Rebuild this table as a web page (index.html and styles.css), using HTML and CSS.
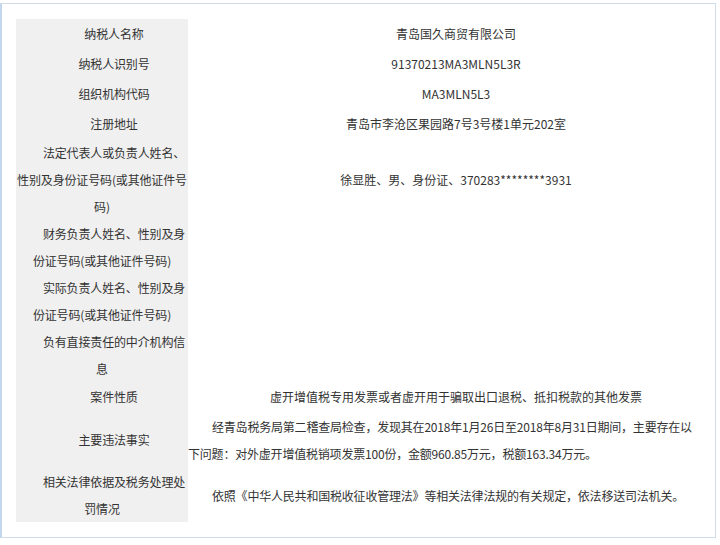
FILE: index.html
```html
<!DOCTYPE html>
<html lang="zh-CN">
<head>
    <meta charset="UTF-8">
    <meta name="viewport" content="width=device-width, initial-scale=1.0">
    <title>重大税收违法案件信息</title>
    <link rel="stylesheet" href="styles.css">
</head>
<body>
    <div class="case-box">
        <table class="case-table">
            <tr class="row-short">
                <td class="label">纳税人名称</td>
                <td class="value">青岛国久商贸有限公司</td>
            </tr>
            <tr class="row-short">
                <td class="label">纳税人识别号</td>
                <td class="value">91370213MA3MLN5L3R</td>
            </tr>
            <tr class="row-short">
                <td class="label">组织机构代码</td>
                <td class="value">MA3MLN5L3</td>
            </tr>
            <tr class="row-short">
                <td class="label">注册地址</td>
                <td class="value">青岛市李沧区果园路7号3号楼1单元202室</td>
            </tr>
            <tr class="row-3">
                <td class="label">法定代表人或负责人姓名、性别及身份证号码(或其他证件号码)</td>
                <td class="value">徐显胜、男、身份证、370283********3931</td>
            </tr>
            <tr class="row-2">
                <td class="label">财务负责人姓名、性别及身份证号码(或其他证件号码)</td>
                <td class="value"></td>
            </tr>
            <tr class="row-2">
                <td class="label">实际负责人姓名、性别及身份证号码(或其他证件号码)</td>
                <td class="value"></td>
            </tr>
            <tr class="row-2">
                <td class="label">负有直接责任的中介机构信息</td>
                <td class="value"></td>
            </tr>
            <tr class="row-kind">
                <td class="label">案件性质</td>
                <td class="value">虚开增值税专用发票或者虚开用于骗取出口退税、抵扣税款的其他发票</td>
            </tr>
            <tr class="row-facts">
                <td class="label">主要违法事实</td>
                <td class="value text">经青岛税务局第二稽查局检查，发现其在2018年1月26日至2018年8月31日期间，主要存在以下问题：对外虚开增值税销项发票100份，金额960.85万元，税额163.34万元。</td>
            </tr>
            <tr class="row-2">
                <td class="label">相关法律依据及税务处理处罚情况</td>
                <td class="value text">依照《中华人民共和国税收征收管理法》等相关法律法规的有关规定，依法移送司法机关。</td>
            </tr>
        </table>
    </div>
</body>
</html>
```

FILE: styles.css
```css
body {
    margin: 0;
    padding-top: 3px;
    font-family: "Microsoft YaHei", "Noto Sans CJK SC", sans-serif;
    font-size: 12px;
    color: #333;
    background-color: #fff;
}
.case-box {
    box-sizing: border-box;
    width: 716px;
    height: 535px;
    border: 1px solid #cfdcea;
    border-left: 2px solid #c3d7ec;
    padding: 15px 0 0 14px;
}
.case-table {
    width: 684px;
    border-collapse: collapse;
    table-layout: fixed;
}
.case-table td {
    padding: 0;
    vertical-align: middle;
    text-align: center;
    text-indent: 2em;
    line-height: 27px;
}
.case-table .label {
    width: 172px;
    background-color: #f0f0f0;
    letter-spacing: -0.15px;
}
.case-table .value.text {
    text-align: left;
    font-family: "SimSun", "Noto Sans CJK SC", sans-serif;
    letter-spacing: -0.2px;
}
.row-short td {
    height: 30px;
    line-height: 30px;
}
.row-3 td {
    height: 81px;
}
.row-2 td {
    height: 54px;
}
.row-kind td {
    height: 29px;
}
.row-facts td {
    height: 57px;
}
```
